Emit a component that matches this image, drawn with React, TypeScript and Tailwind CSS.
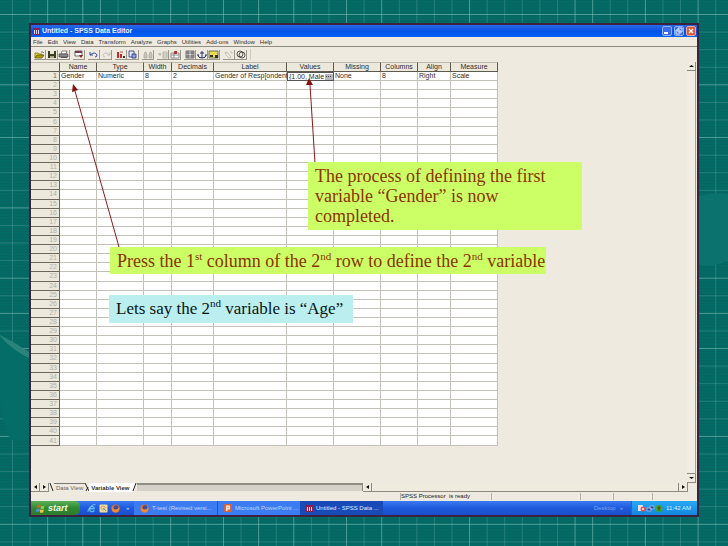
import React from "react";

const COLUMNS = [
  { name: "Name", width: "w-[37px]", value: "Gender" },
  { name: "Type", width: "w-[47px]", value: "Numeric" },
  { name: "Width", width: "w-[28px]", value: "8" },
  { name: "Decimals", width: "w-[42px]", value: "2" },
  { name: "Label", width: "w-[73px]", value: "Gender of Resp[ondent" },
  { name: "Values", width: "w-[47px]", value: "{1.00, Male" },
  { name: "Missing", width: "w-[47px]", value: "None" },
  { name: "Columns", width: "w-[37px]", value: "8" },
  { name: "Align", width: "w-[33px]", value: "Right" },
  { name: "Measure", width: "w-[47px]", value: "Scale" },
];
const ROWS = Array.from({ length: 41 }, (_, i) => i + 1);
const MENUS = ["File", "Edit", "View", "Data", "Transform", "Analyze", "Graphs", "Utilities", "Add-ons", "Window", "Help"];

const STEP = 17.58;
const BRIGHT_X = [2, 4, 5, 9, 12, 14, 16, 19, 21, 26, 32, 33, 36, 39];
const BRIGHT_Y = [0, 4, 7, 11, 15, 17, 19, 24, 29];

function SlideBackground() {
  const n = Array.from({ length: 60 }, (_, i) => i);
  return (
    <svg className="absolute inset-0 h-full w-full" aria-hidden="true">
      <defs>
        <pattern id="scan" width="4" height="3" patternUnits="userSpaceOnUse">
          <rect width="4" height="1" fill="#0b5f5c" opacity="0.5" />
        </pattern>
      </defs>
      <rect width="100%" height="100%" fill="#036a66" />
      <rect width="100%" height="100%" fill="url(#scan)" />
      {n.map((i) => (
        <rect key={"x" + i} x={12 + i * STEP} y="0" width="1" height="100%" fill="#7cc0b8" opacity={BRIGHT_X.includes(i) ? 0.6 : 0.28} />
      ))}
      {n.map((i) => (
        <rect key={"y" + i} x="0" y={14 + i * STEP} width="100%" height="1" fill="#7cc0b8" opacity={BRIGHT_Y.includes(i) ? 0.6 : 0.28} />
      ))}
      <path d="M0 335 Q14 348 29 355 V440 H10 Q2 420 0 400Z" fill="#046d68" />
      <path d="M0 335 Q14 342 29 352 V358 Q12 350 0 336Z" fill="#2b837d" />
      <path d="M699 196 Q714 192 728 194 V260 Q714 268 699 265Z" fill="#0b726d" />
    </svg>
  );
}

const K = "#333";
const TOOLS: { label: string; art: React.ReactNode }[][] = [
  [
    { label: "Open", art: <><path d="M1 8V3h3l1 1h3v1" fill="#e8d840" stroke="#6b6400" strokeWidth=".7" /><path d="M1 8l2-3h7L8 8z" fill="#b0a000" stroke="#555000" strokeWidth=".7" /><path d="M7 2h2l1 1" fill="none" stroke={K} strokeWidth=".6" /></> },
    { label: "Save", art: <><path d="M2 1h8v7H2z" fill="#3c3c20" /><path d="M4 1h4v3H4z" fill="#e8e6d8" /><path d="M4 6h4v2H4z" fill="#aaa68c" /></> },
    { label: "Print", art: <><path d="M4 1h5L8 4H3z" fill="#fff" stroke={K} strokeWidth=".6" /><path d="M1 4h9v3H1z" fill="#8b8b95" stroke={K} strokeWidth=".6" /><path d="M3 7h6v1H3z" fill="#555" /></> },
  ],
  [{ label: "Dialog recall", art: <><path d="M2 1h7v5H2z" fill="#fff" stroke={K} strokeWidth=".7" /><path d="M2 1h7v2H2z" fill="#7a3b52" /><path d="M6 5h4L8 8z" fill="#8b2020" /></> }],
  [
    { label: "Undo", art: <path d="M2 2v3h3M2 5q5-4 7 0q0 2-2 2" fill="none" stroke="#3548a8" strokeWidth="1" /> },
    { label: "Redo", art: <path d="M10 2v3H7M10 5q-5-4-7 0q0 2 2 2" fill="none" stroke="#c5c1b4" strokeWidth="1" /> },
  ],
  [
    { label: "Go to case", art: <><path d="M2 2h2v6H2zM5 4h2v4H5z" fill="#c42a2a" /><path d="M8 6h2v2H8z" fill="#333" /><path d="M5 2h3" stroke="#c42a2a" strokeWidth=".8" /></> },
    { label: "Variables", art: <><path d="M2 1h5v6H2z" fill="#dfe5fa" stroke="#28347c" strokeWidth=".8" /><path d="M5 4h4v4H5z" fill="#8fa0e0" stroke="#28347c" strokeWidth=".8" /></> },
  ],
  [{ label: "Find", art: <path d="M2 8V5l1-3h1l1 3v3zM7 8V5l1-3h1l1 3v3z" fill="#c9c5b8" stroke="#a9a598" strokeWidth=".7" /> }],
  [
    { label: "Insert case", art: <path d="M1 4h3M6 2h4v6H6zM6 4h4M6 6h4M3 3v3" fill="none" stroke="#aaa69a" strokeWidth=".8" /> },
    { label: "Insert variable", art: <><path d="M2 3h8v5H2zM2 5h8M5 3v5" fill="#fff" stroke="#666" strokeWidth=".7" /><path d="M5 1h3v3H5z" fill="#a73a3a" /></> },
  ],
  [
    { label: "Split file", art: <path d="M2 1h8v7H2zM2 3h8M2 6h8M4 1v7M8 1v7" fill="#ddd" stroke="#444" strokeWidth=".7" /> },
    { label: "Weight cases", art: <path d="M6 1v7M4 3h4M2 5q0 3 4 3t4-3M1 5h2M9 5h2" fill="none" stroke="#26346e" strokeWidth="1" /> },
    { label: "Select cases", art: <><path d="M1 1h9v7H1z" fill="#e8dc50" stroke="#444" strokeWidth=".7" /><path d="M2 5h3v2H2zM7 5h3v3H7z" fill="#333" /></> },
  ],
  [
    { label: "Value labels", art: <path d="M2 2l3 1 3 4-2 1-3-3zM7 2h2v2" fill="none" stroke="#bbb7aa" strokeWidth=".8" /> },
    { label: "Use sets", art: <><circle cx="5" cy="4" r="3" fill="none" stroke={K} strokeWidth=".8" /><circle cx="7" cy="5" r="3" fill="none" stroke={K} strokeWidth=".8" /></> },
  ],
];

function Arrow({ dir, label }: { dir: "left" | "right" | "up" | "down"; label: string }) {
  const d = { left: "M5 1v4L2 3z", right: "M2 1v4l3-2z", up: "M1 4h5L3.5 2z", down: "M1 2h5L3.5 4z" }[dir];
  return (
    <button aria-label={label} className="flex h-[9px] w-[9px] shrink-0 items-center justify-center border-r border-b border-[#8d897d] bg-[#efebdf]">
      <svg className="h-[6px] w-[7px]" viewBox="0 0 7 6"><path d={d} fill="#111" /></svg>
    </button>
  );
}

function SpssIcon() {
  return (
    <svg className="h-[7px] w-[7px] shrink-0" viewBox="0 0 7 7" aria-hidden="true">
      <path d="M0 0h7v7H0z" fill="#8a1f4b" />
      <path d="M1 2h1v4H1zM3 2h1v4H3zM5 2h1v4H5z" fill="#e8d6e8" />
    </svg>
  );
}

function FirefoxIcon() {
  return (
    <svg className="h-[9px] w-[9px] shrink-0" viewBox="0 0 9 9" aria-hidden="true">
      <circle cx="4.5" cy="4.5" r="4" fill="#e2702a" />
      <circle cx="5" cy="3.7" r="2.4" fill="#3a4f9c" />
      <path d="M.6 3Q2 6 5 5.500Q7 5 8.500 3.500Q8.500 8.500 4.500 8.500Q.6 8 .6 3z" fill="#f08a35" />
    </svg>
  );
}

function PowerPointIcon() {
  return (
    <svg className="h-[8px] w-[8px] shrink-0" viewBox="0 0 8 8" aria-hidden="true">
      <rect width="8" height="8" rx="1" fill="#d9603a" />
      <path d="M2 1.500h4v4H3.500v1.500H2z" fill="#fbe6dc" />
      <path d="M3.500 3h1v1h-1z" fill="#d9603a" />
    </svg>
  );
}

function TitleBar() {
  const base = "flex h-[10px] w-[10px] items-center justify-center rounded-[2px] border";
  return (
    <header className="flex h-[12px] items-center gap-[2px] bg-linear-to-b from-[#2a68e8] via-[#0353e4] to-[#0560fb] pr-px pl-[2px]">
      <SpssIcon />
      <h1 className="grow text-[7px] leading-[10px] font-bold text-[#e6eeff]">Untitled - SPSS Data Editor</h1>
      <div className="flex gap-[2px]">
        <button aria-label="Minimize" className={`${base} border-[#8fb0f5] bg-[#3a6ce8]`}>
          <svg className="h-2 w-2" viewBox="0 0 8 8"><path d="M1 5h4v2H1z" fill="#fff" /></svg>
        </button>
        <button aria-label="Restore" className={`${base} border-[#8fb0f5] bg-[#3a6ce8]`}>
          <svg className="h-2 w-2" viewBox="0 0 8 8"><path d="M3 1h4v4H3zM1 3h4v4H1z" fill="#4a7af0" stroke="#d8e4ff" /></svg>
        </button>
        <button aria-label="Close" className={`${base} border-[#e8a898] bg-[#dc5a3c]`}>
          <svg className="h-2 w-2" viewBox="0 0 8 8"><path d="M2 2l4 4M6 2L2 6" stroke="#fff" strokeWidth="1.300" /></svg>
        </button>
      </div>
    </header>
  );
}

function VariableGrid() {
  return (
    <table className="h-[384px] w-[467px] shrink-0 table-fixed border-separate border-spacing-0 text-[7px] leading-[8px] text-[#2e2e2e]">
      <colgroup>
        <col className="w-[29px]" />
        {COLUMNS.map((c) => <col key={c.name} className={c.width} />)}
      </colgroup>
      <thead>
        <tr className="h-[10px]">
          <th aria-label="Row" className="border-t border-r border-b border-t-[#bdb9ac] border-r-[#5d5a50] border-b-[#5d5a50] bg-[#ece8db] p-0" />
          {COLUMNS.map((c) => (
            <th key={c.name} scope="col" className="border-t border-r border-b border-t-[#bdb9ac] border-r-[#5d5a50] border-b-[#5d5a50] bg-[#ece8db] p-0 text-center font-normal">{c.name}</th>
          ))}
        </tr>
      </thead>
      <tbody>
        {ROWS.map((r) => (
          <tr key={r} className="h-[9px]">
            <th scope="row" className={`border-r border-b border-[#6b675c] bg-[#ece8db] p-0 pr-[2px] text-right font-normal ${r === 1 ? "text-[#6d6a62]" : "text-[#b3afa4]"}`}>{r}</th>
            {COLUMNS.map((c) =>
              r === 1 && c.name === "Values" ? (
                <td key={c.name} className="bg-white p-0 outline-1 -outline-offset-1 outline-[#555]">
                  <div className="flex items-center justify-between pl-[2px]">
                    <span className="whitespace-nowrap">{c.value}</span>
                    <button aria-label="Edit values" className="mr-px flex h-[6px] w-[8px] items-center justify-center bg-[#b9b9bd]">
                      <svg className="h-[2px] w-[6px]" viewBox="0 0 6 2"><path d="M0 0h1v1H0zM2 0h1v1H2zM4 0h1v1H4z" fill="#444" /></svg>
                    </button>
                  </div>
                </td>
              ) : (
                <td key={c.name} className="border-r border-b border-[#c4c1b8] bg-white p-0 pl-px whitespace-nowrap">{r === 1 ? c.value : ""}</td>
              ),
            )}
          </tr>
        ))}
      </tbody>
    </table>
  );
}

function ViewTabs() {
  return (
    <div className="flex h-[9px] items-stretch text-[6px] leading-[8px] text-[#333]">
      <Arrow dir="left" label="Previous sheet" />
      <Arrow dir="right" label="Next sheet" />
      <svg className="h-[9px] w-[5px] shrink-0" viewBox="0 0 5 9" aria-hidden="true"><path d="M1 0l3 8" stroke="#222" /></svg>
      <button className="border-t border-[#777] px-[2px] text-[#666]">Data View</button>
      <svg className="h-[9px] w-[4px] shrink-0" viewBox="0 0 4 9" aria-hidden="true"><path d="M0 0l4 8M3 4L1 8" stroke="#222" /></svg>
      <button className="bg-white px-[2px] font-bold">Variable View</button>
      <svg className="h-[9px] w-[5px] shrink-0" viewBox="0 0 5 9" aria-hidden="true"><path d="M0 0h4L1 9H0z" fill="#fff" /><path d="M4 0L1 8" stroke="#222" /></svg>
      <div className="h-[8px] grow-[227] basis-0 border-t-2 border-r border-[#8f8c83] bg-[#d5d1c9]" />
      <Arrow dir="left" label="Scroll left" />
      <div className="grow-[307] basis-0 border-r border-b border-[#8d897d] bg-[#efebdf]" />
      <Arrow dir="right" label="Scroll right" />
      <div className="w-[9px] shrink-0" />
    </div>
  );
}

function StatusBar() {
  const cell = "h-[7px] border-l border-[#b5b1a4]";
  return (
    <div className="flex h-[9px] items-center justify-end text-[6px] leading-[7px] text-[#222]">
      <output className={`${cell} w-[91px] whitespace-pre`}>SPSS Processor  is ready</output>
      <span className={`${cell} w-[89px]`} />
      <span className={`${cell} w-[33px]`} />
      <span className={`${cell} w-[39px]`} />
      <span className={`${cell} w-[45px]`} />
    </div>
  );
}

function Taskbar() {
  const task = "flex w-[83px] items-center gap-[3px] pl-[6px] whitespace-nowrap";
  return (
    <footer className="flex h-[14px] items-stretch bg-linear-to-b from-[#3a7af0] via-[#1f5ade] to-[#1b4fc8] text-[6px] leading-[8px] text-[#c3d6ff]">
      <button className="flex w-[49px] items-center gap-[3px] rounded-r-[5px] bg-linear-to-b from-[#5bb15b] via-[#2f8a2f] to-[#2d7d2d] pl-[5px] text-[9px] leading-[12px] font-bold text-[#effbe8] italic">
        <svg className="h-[9px] w-[9px] shrink-0" viewBox="0 0 9 9" aria-hidden="true">
          <path d="M1 1.500q2-1 3.500 0L4 4q-1.500-1-3.500 0z" fill="#e8582c" />
          <path d="M5 1.500q1.500 1 3.500 0L8 4.500q-2 1-3.500 0z" fill="#8ccc3c" />
          <path d="M.5 5q2-1 3.500 0l-.5 3q-1.500-1-3.500 0z" fill="#4f8cf0" />
          <path d="M4.300 5.300q1.500 1 3.500 0l-.5 3q-2 1-3.500 0z" fill="#f5c830" />
        </svg>
        start
      </button>
      <nav aria-label="Quick launch" className="flex w-[54px] items-center gap-[3px] pl-[7px]">
        <button aria-label="Internet Explorer">
          <svg className="h-[9px] w-[9px]" viewBox="0 0 9 9"><path d="M7.500 6.500Q6 8 4 7.500Q2 6.500 2.500 4.500Q3.500 2 5.500 2.500Q7.500 3 7 4.800H3" fill="none" stroke="#58b8f0" strokeWidth="1.400" /><path d="M1 8Q0 6 4 2.500T8.500 1" fill="none" stroke="#9fd8f8" strokeWidth=".7" /></svg>
        </button>
        <button aria-label="Outlook">
          <svg className="h-[9px] w-[9px]" viewBox="0 0 9 9"><rect x=".5" y=".5" width="8" height="8" rx="1" fill="#f0d9a0" /><circle cx="4" cy="4" r="2" fill="none" stroke="#c89a4a" strokeWidth=".8" /><path d="M4 4l3 3" stroke="#6a8ad0" /></svg>
        </button>
        <button aria-label="Firefox"><FirefoxIcon /></button>
        <span className="pl-[3px]">»</span>
      </nav>
      <button className={`${task} bg-[#3c7cf2]`}><FirefoxIcon />T-test (Revised versi...</button>
      <button className={`${task} border-l border-[#2057c8] bg-[#3c7cf2]`}><PowerPointIcon />Microsoft PowerPoint ...</button>
      <button className={`${task} bg-[#184bb8] text-[#e0e9ff]`}><SpssIcon />Untitled - SPSS Data ...</button>
      <div className="flex grow items-center justify-end gap-[4px] pr-[8px] text-[#7fa3f0]"><span>Desktop</span><span>»</span></div>
      <div className="flex w-[66px] items-center gap-[2px] border-l border-[#0e6fc8] bg-linear-to-b from-[#28a8f4] to-[#1287e0] pl-[5px] text-[#d8efff]">
        <svg className="h-[9px] w-[27px] shrink-0" viewBox="0 0 27 9" aria-hidden="true">
          <path d="M1 1h5v6H1z" fill="#e6e0e8" /><circle cx="6" cy="5" r="2.500" fill="#e05050" /><path d="M5 4l2 2M7 4L5 6" stroke="#fff" strokeWidth=".7" />
          <path d="M10 4h4v3h-4zM13 2h4v3h-4z" fill="#34468e" stroke="#b8c8f0" strokeWidth=".7" />
          <circle cx="22" cy="4.500" r="3.500" fill="#2fae3a" /><path d="M20 4h4M22 2v5" stroke="#7a3a1a" strokeWidth="1.200" />
        </svg>
        <time className="whitespace-nowrap">11:42 AM</time>
      </div>
    </footer>
  );
}

function Ordinal({ children }: { children: string }) {
  return <sup className="-top-[7px] text-[11px]">{children}</sup>;
}

export default function App() {
  return (
    <main className="relative min-h-screen overflow-hidden px-[29px] py-[23px] font-['Liberation_Sans',Arial,sans-serif]">
      <SlideBackground />
      <section className="relative border-2 border-[#3b2340] bg-[#eeeadf]">
        <TitleBar />
        <nav aria-label="Menu" className="flex h-[10px] items-center gap-[5px] border-b border-[#8f8c82] pl-[2px] text-[6px] leading-[8px] text-[#333]">
          {MENUS.map((m) => <button key={m}>{m}</button>)}
        </nav>
        <div role="toolbar" aria-label="Tools" className="flex h-[15px] items-center gap-[3px] pl-[3px]">
          {TOOLS.map((group, i) => (
            <div key={i} className="flex">
              {group.map((t) => (
                <button key={t.label} aria-label={t.label} className="h-[10px] w-[12px] border-r border-b border-[#9b978b]">
                  <svg className="h-[9px] w-[11px]" viewBox="0 0 11 9">{t.art}</svg>
                </button>
              ))}
            </div>
          ))}
          <span className="h-[11px] w-px bg-[#cfcbbe]" />
        </div>
        <div className="flex items-stretch justify-between">
          <div className="pb-[37px]"><VariableGrid /></div>
          <div className="mr-px flex w-[9px] flex-col border-r border-[#a5a195]">
            <Arrow dir="up" label="Scroll up" />
            <div className="grow border-b border-[#8d897d] bg-[#f1ede2]" />
            <Arrow dir="down" label="Scroll down" />
          </div>
        </div>
        <ViewTabs />
        <StatusBar />
        <Taskbar />
      </section>

      <svg className="absolute top-0 left-0 h-[280px] w-[360px]" viewBox="0 0 360 280" aria-hidden="true">
        <g stroke="#8a1a1a" fill="#8a1010">
          <path d="M119 247L75 91" />
          <path d="M73 84l5 6-6 2z" stroke="none" />
          <path d="M315 163L310 85" />
          <path d="M309 78l4 7h-7z" stroke="none" />
        </g>
      </svg>
      <div className="font-['Liberation_Serif',serif] text-[18px] leading-[20px] text-[#8a3300]">
        <p className="absolute top-[162px] left-[308px] w-[274px] bg-[#ccff66] py-[4px] pr-[30px] pl-[7px]">
          The process of defining the first variable “Gender” is now completed.
        </p>
        <p className="absolute top-[247px] left-[110px] h-[27px] w-[436px] bg-[#ccff66] py-[4px] pl-[7px] whitespace-nowrap">
          Press the 1<Ordinal>st</Ordinal> column of the 2<Ordinal>nd</Ordinal> row to define the 2<Ordinal>nd</Ordinal> variable
        </p>
        <p className="absolute top-[295px] left-[109px] h-[28px] w-[244px] bg-[#bbeeee] py-[4px] pl-[7px] text-[17px] whitespace-nowrap text-[#0c1414]">
          Lets say the 2<Ordinal>nd</Ordinal> variable is “Age”
        </p>
      </div>
    </main>
  );
}
